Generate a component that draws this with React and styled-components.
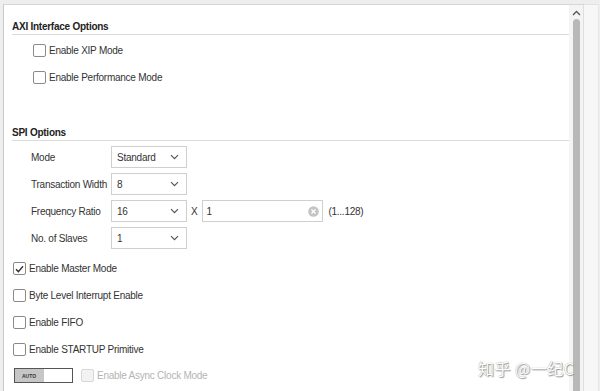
import React from 'react';
import styled, { createGlobalStyle } from 'styled-components';

const GlobalStyle = createGlobalStyle`
  html, body {
    margin: 0;
    padding: 0;
    background: #f0f0f0;
    font-family: "Liberation Sans", Arial, sans-serif;
    font-size: 10px;
    letter-spacing: -0.25px;
    color: #333;
  }
`;

const Frame = styled.div`
  position: relative;
  width: 600px;
  height: 391px;
  overflow: hidden;
  display: flex;
  padding-top: 4px;
  box-sizing: border-box;
  background: #eeeeee;
`;

const Panel = styled.div`
  flex: 1;
  display: flex;
  margin-left: 3px;
  border-top: 1px solid #d6d6d6;
  border-left: 1px solid #c8c8c8;
  background: #fff;
`;

const Content = styled.div`
  flex: 1;
  padding: 15px 0 0 8px;
  box-sizing: border-box;
`;

const Section = styled.div`
  margin-bottom: ${p => p.$gap || 0}px;
`;

const SectionTitle = styled.div`
  font-weight: bold;
  line-height: 13px;
  color: #222;
  padding-bottom: 1px;
  border-bottom: 1px solid #dcdcdc;
`;

const CheckList = styled.div`
  display: flex;
  flex-direction: column;
  gap: ${p => p.$gap}px;
  padding-left: ${p => p.$indent}px;
  padding-top: ${p => p.$top}px;
`;

const CheckRow = styled.label`
  display: flex;
  align-items: center;
  gap: 3px;
  height: 13px;
  white-space: nowrap;
  color: ${p => (p.$disabled ? '#b4b4b4' : '#333')};
`;

const Box = styled.span`
  width: 11px;
  height: 11px;
  border: 1px solid ${p => (p.$disabled ? '#d8d8d8' : '#8a8a8a')};
  border-radius: 2px;
  background: ${p => (p.$disabled ? '#f2f2f2' : '#fff')};
  display: flex;
  align-items: center;
  justify-content: center;
  flex-shrink: 0;
`;

const Form = styled.div`
  display: grid;
  grid-template-columns: 80px auto;
  row-gap: 5px;
  padding: 5px 0 0 19px;
  align-items: center;
`;

const Label = styled.span`
  white-space: nowrap;
  color: #333;
`;

const Field = styled.div`
  display: flex;
  align-items: center;
`;

const Select = styled.div`
  width: 76px;
  height: 22px;
  box-sizing: border-box;
  border: 1px solid #cfcfcf;
  display: flex;
  align-items: center;
  justify-content: space-between;
  padding: 0 7px 0 5px;
  background: #fff;
`;

const Times = styled.span`
  margin: 0 5px 0 4px;
`;

const TextInput = styled.div`
  width: 121px;
  height: 22px;
  box-sizing: border-box;
  border: 1px solid #cfcfcf;
  display: flex;
  align-items: center;
  justify-content: space-between;
  padding: 0 3px;
`;

const Range = styled.span`
  margin-left: 5px;
  color: #333;
`;

const Toggle = styled.div`
  width: 59px;
  height: 15px;
  box-sizing: border-box;
  border: 1px solid #555;
  display: flex;
  background: #fff;
`;

const ToggleKnob = styled.div`
  width: 29px;
  background: #c6c6c6;
  font-size: 5px;
  letter-spacing: 0;
  font-weight: bold;
  color: #333;
  display: flex;
  align-items: center;
  padding-left: 7px;
  box-sizing: border-box;
`;

const AutoRow = styled.div`
  display: flex;
  align-items: center;
  gap: 8px;
  padding: 12px 0 0 2px;
`;

const ScrollColumn = styled.div`
  width: 14px;
  background: #f4f4f4;
  border-right: 1px solid #dedede;
  display: flex;
  flex-direction: column;
  align-items: center;
  padding-top: 5px;
`;

const Thumb = styled.div`
  width: 7px;
  flex: 1;
  margin-top: 3px;
  background: #b8b8b8;
  border-radius: 4px 4px 0 0;
`;

const Edge = styled.div`
  width: 14px;
  background: #f7f7f7;
  border-top: 1px solid #e2e2e2;
  border-right: 1px solid #e6e6e6;
  margin-right: 1px;
`;

const Watermark = styled.div`
  position: absolute;
  left: 478px;
  top: 356px;
  font-family: "Noto Sans CJK SC", "Liberation Sans", sans-serif;
  font-size: 16px;
  color: #fff;
  text-shadow: 0 0 1px #888, 1px 1px 1px #999;
  letter-spacing: 0.5px;
`;

const Chevron = () => (
  <svg width="9" height="6" viewBox="0 0 9 6">
    <path d="M1 1.2l3.5 3.5L8 1.2" fill="none" stroke="#555" strokeWidth="1.2" />
  </svg>
);

const Check = () => (
  <svg width="9" height="8" viewBox="0 0 9 8">
    <path d="M1 4.2l2.4 2.4L8 1.2" fill="none" stroke="#333" strokeWidth="1.4" />
  </svg>
);

const ClearIcon = () => (
  <svg width="11" height="11" viewBox="0 0 11 11">
    <circle cx="5.5" cy="5.5" r="5.3" fill="#c4c4c4" />
    <path d="M3.5 3.5l4 4M7.5 3.5l-4 4" stroke="#fff" strokeWidth="1.3" />
  </svg>
);

const UpArrow = () => (
  <svg width="9" height="6" viewBox="0 0 9 6">
    <path d="M1 5l3.5-3.5L8 5" fill="none" stroke="#555" strokeWidth="1.3" />
  </svg>
);

function CheckItem({ children, checked, disabled }) {
  return (
    <CheckRow $disabled={disabled}>
      <Box $disabled={disabled}>{checked && <Check />}</Box>
      {children}
    </CheckRow>
  );
}

function Dropdown({ value }) {
  return (
    <Select>
      <span>{value}</span>
      <Chevron />
    </Select>
  );
}

function App() {
  return (
    <Frame>
      <GlobalStyle />
      <Panel>
        <Content>
          <Section $gap={42}>
            <SectionTitle>AXI Interface Options</SectionTitle>
            <CheckList $gap={14} $indent={21} $top={9}>
              <CheckItem>Enable XIP Mode</CheckItem>
              <CheckItem>Enable Performance Mode</CheckItem>
            </CheckList>
          </Section>
          <Section>
            <SectionTitle>SPI Options</SectionTitle>
            <Form>
              <Label>Mode</Label>
              <Field><Dropdown value="Standard" /></Field>
              <Label>Transaction Width</Label>
              <Field><Dropdown value="8" /></Field>
              <Label>Frequency Ratio</Label>
              <Field>
                <Dropdown value="16" />
                <Times>X</Times>
                <TextInput>
                  <span>1</span>
                  <ClearIcon />
                </TextInput>
                <Range>(1...128)</Range>
              </Field>
              <Label>No. of Slaves</Label>
              <Field><Dropdown value="1" /></Field>
            </Form>
            <CheckList $gap={14} $indent={1} $top={13}>
              <CheckItem checked>Enable Master Mode</CheckItem>
              <CheckItem>Byte Level Interrupt Enable</CheckItem>
              <CheckItem>Enable FIFO</CheckItem>
              <CheckItem>Enable STARTUP Primitive</CheckItem>
            </CheckList>
            <AutoRow>
              <Toggle>
                <ToggleKnob>AUTO</ToggleKnob>
              </Toggle>
              <CheckItem disabled>Enable Async Clock Mode</CheckItem>
            </AutoRow>
          </Section>
        </Content>
        <ScrollColumn>
          <UpArrow />
          <Thumb />
        </ScrollColumn>
      </Panel>
      <Edge />
      <Watermark>知乎 @一纪C</Watermark>
    </Frame>
  );
}

export default App;
